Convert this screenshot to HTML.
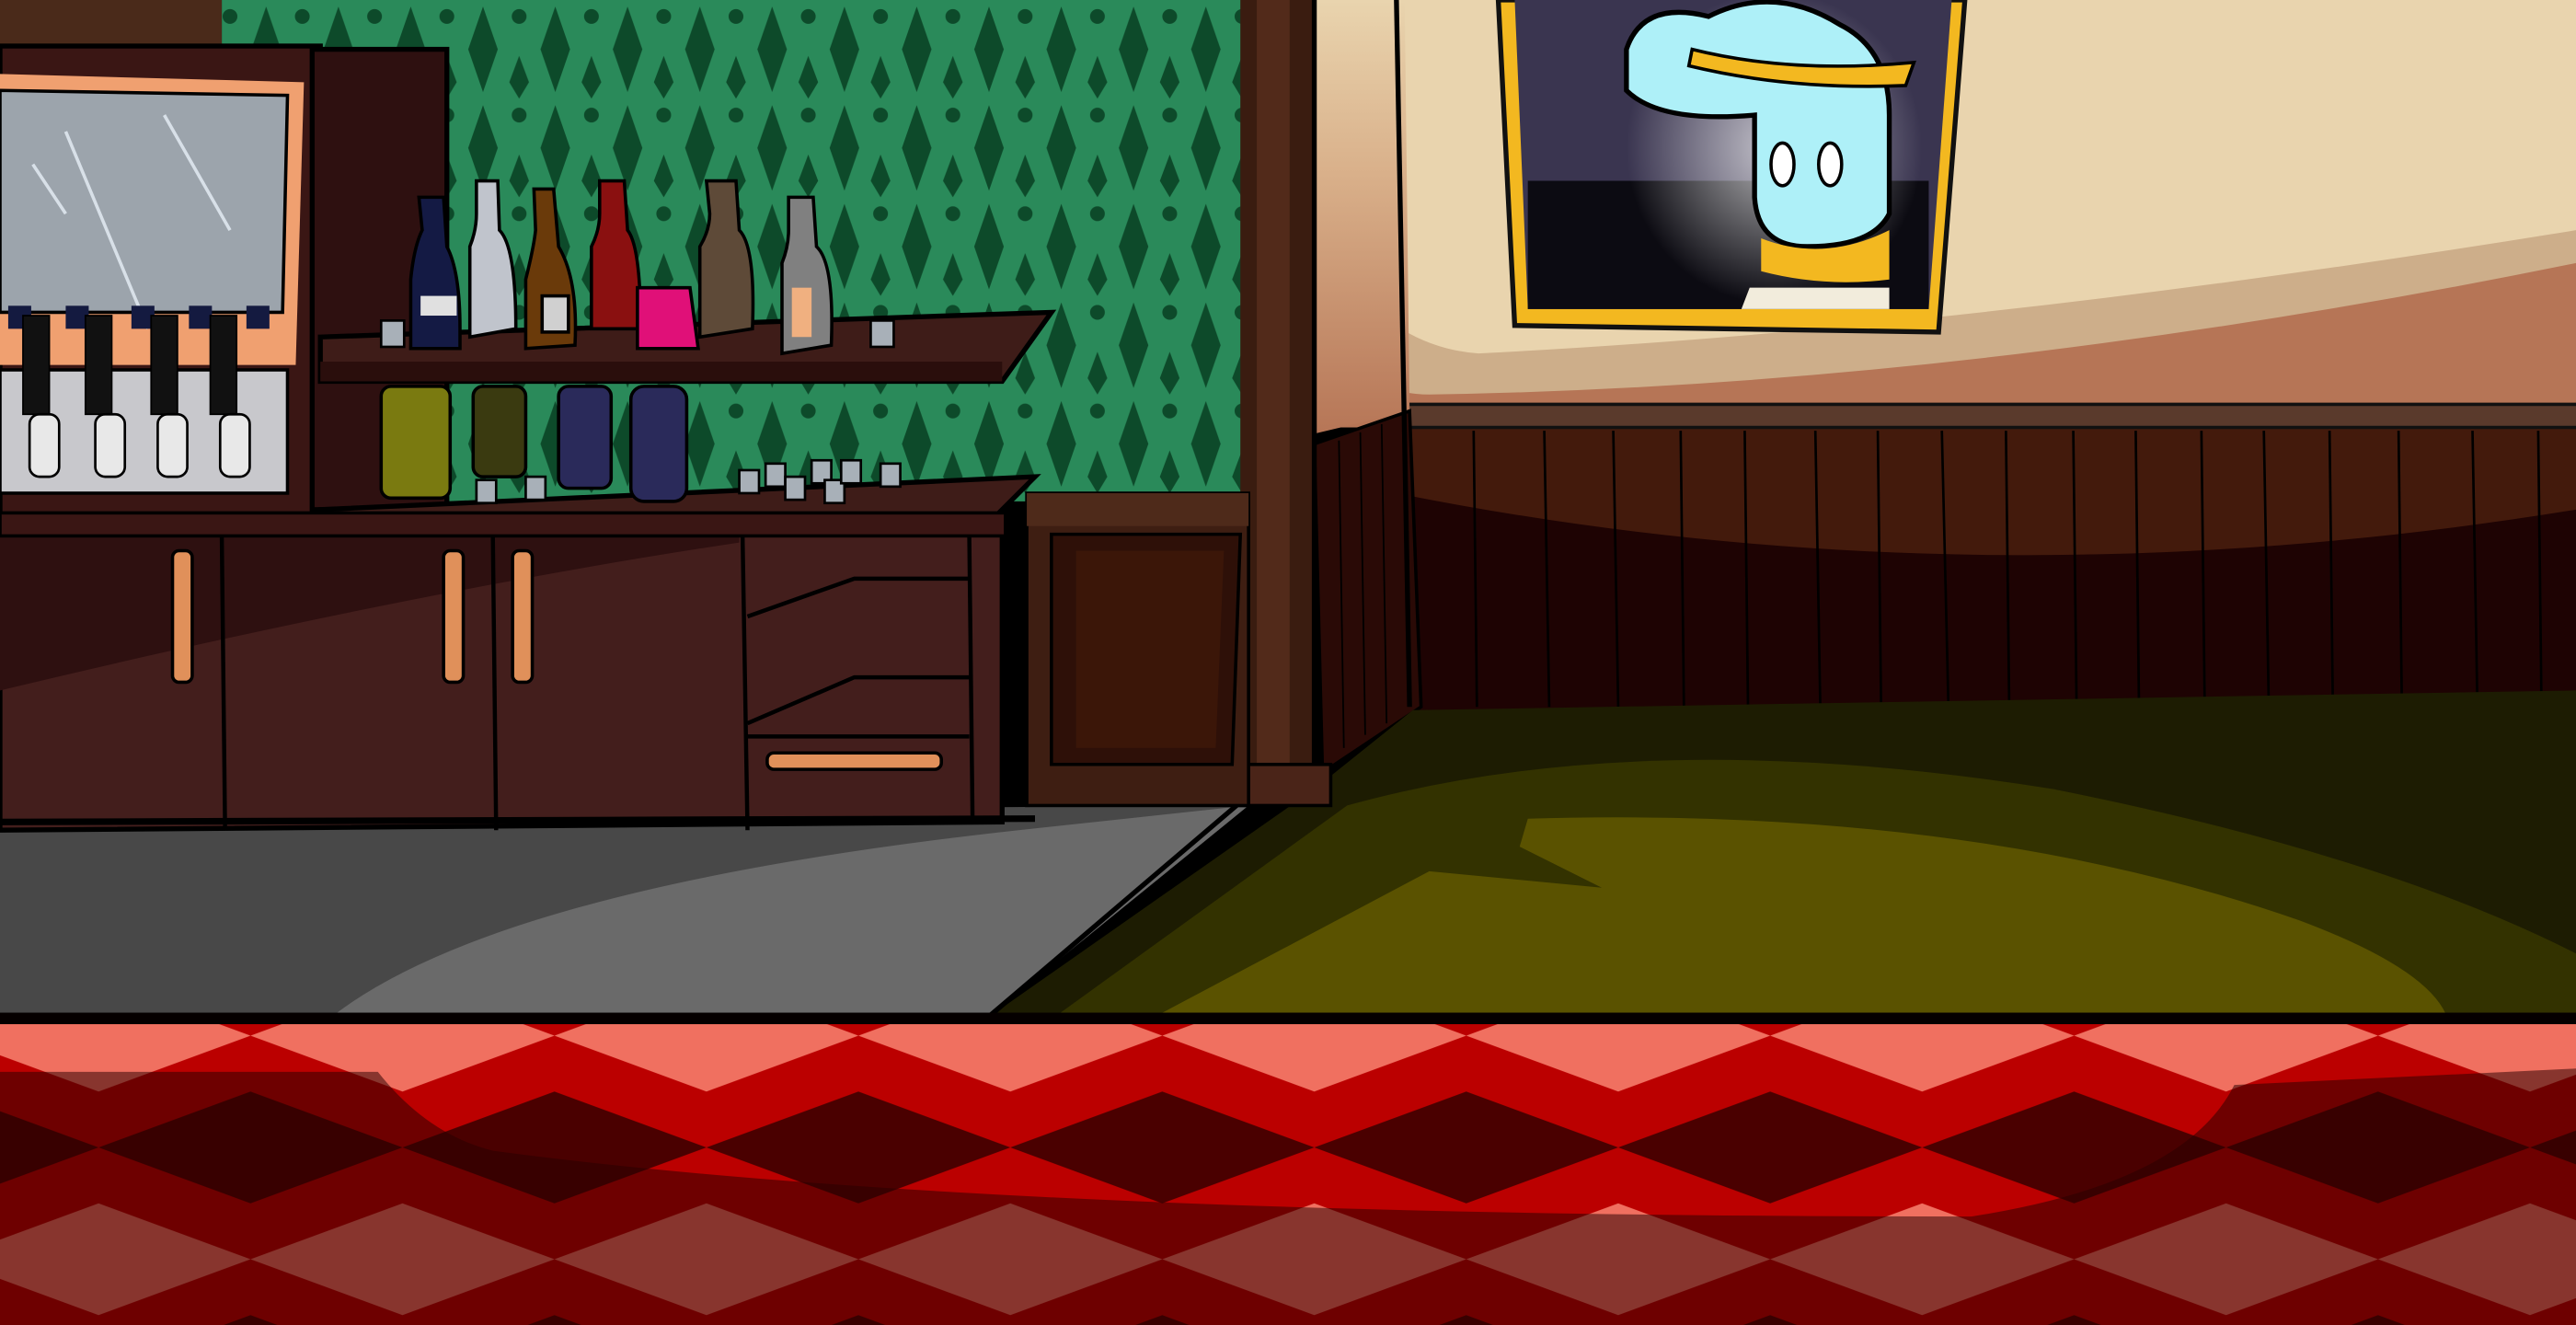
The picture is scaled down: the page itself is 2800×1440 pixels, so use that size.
<!DOCTYPE html>
<html><head><meta charset="utf-8"><style>
html,body{margin:0;padding:0;width:2800px;height:1440px;overflow:hidden;background:#000}
svg{display:block}
</style></head><body>
<svg width="2800" height="1440" viewBox="0 0 1568 806" preserveAspectRatio="none" xmlns="http://www.w3.org/2000/svg">
<defs>
<pattern id="wall" width="44" height="60" patternUnits="userSpaceOnUse" x="140" y="0">
<rect width="44" height="60" fill="#2a8a5a"/>
<path d="M22 4 L31 30 L22 56 L13 30Z" fill="#0d4a2a"/>
<path d="M0 34 L6 50 L0 60Z M44 34 L38 50 L44 60Z" fill="#0d4a2a"/>
<circle cx="0" cy="10" r="4.5" fill="#0d4a2a"/><circle cx="44" cy="10" r="4.5" fill="#0d4a2a"/>
</pattern>
<pattern id="chk" width="185" height="136" patternUnits="userSpaceOnUse" x="60" y="630">
<rect width="185" height="136" fill="#bb0000"/>
<path d="M0 -34 L92.5 0 L0 34 L-92.5 0Z M185 -34 L277.5 0 L185 34 L92.5 0Z M0 102 L92.5 136 L0 170 L-92.5 136Z M185 102 L277.5 136 L185 170 L92.5 136Z" fill="#f07060"/>
<path d="M92.5 34 L185 68 L92.5 102 L0 68Z" fill="#4a0000"/>
</pattern>
<linearGradient id="corner" x1="0" y1="0" x2="0" y2="1">
<stop offset="0" stop-color="#e9d4ae"/><stop offset="0.4" stop-color="#d9b08a"/><stop offset="1" stop-color="#b67556"/>
</linearGradient>
<radialGradient id="glow" cx="0.5" cy="0.5" r="0.5">
<stop offset="0" stop-color="#ffffff" stop-opacity="0.7"/><stop offset="1" stop-color="#ffffff" stop-opacity="0"/>
</radialGradient>
</defs>

<!-- right wall -->
<rect x="790" y="0" width="778" height="260" fill="#e9d4ae"/>
<path d="M790 120 Q830 210 900 215 Q1200 200 1568 140 L1568 260 L790 260Z" fill="#cdae8a"/>
<path d="M790 200 Q830 240 870 240 Q1200 235 1568 160 L1568 260 L790 260Z" fill="#b67556"/>
<!-- painting -->
<path d="M912 0 L1196 0 L1180 202 L922 198Z" fill="#f3b820" stroke="#111" stroke-width="3"/>
<path d="M922 0 L1188 0 L1174 188 L930 188Z" fill="#3a3550"/>
<path d="M930 110 L1174 110 L1174 188 L930 188Z" fill="#0c0b12"/>
<ellipse cx="1080" cy="90" rx="90" ry="95" fill="url(#glow)"/>
<path d="M990 30 Q1000 0 1040 10 Q1080 -10 1120 15 Q1150 30 1150 70 L1150 130 Q1140 150 1100 150 Q1070 150 1068 120 L1068 70 Q1010 75 990 55Z" fill="#aef0f8" stroke="#000" stroke-width="3"/>
<path d="M1030 30 Q1090 45 1165 38 L1160 52 Q1090 55 1028 40Z" fill="#f3b820" stroke="#000" stroke-width="2"/>
<ellipse cx="1085" cy="100" rx="7" ry="13" fill="#fff" stroke="#000" stroke-width="2"/>
<ellipse cx="1114" cy="100" rx="7" ry="13" fill="#fff" stroke="#000" stroke-width="2"/>
<path d="M1072 145 Q1110 160 1150 140 L1150 170 Q1110 175 1072 165Z" fill="#f3b820"/>
<path d="M1065 175 L1150 175 L1150 188 L1060 188Z" fill="#f2ecdc"/>
<!-- wainscot right -->
<rect x="850" y="245" width="718" height="190" fill="#431a0c"/>
<path d="M850 300 Q1200 370 1568 310 L1568 435 L850 435Z" fill="#1e0303"/>
<rect x="850" y="245" width="718" height="15" fill="#5a3a2c"/>
<line x1="850" y1="246" x2="1568" y2="246" stroke="#111" stroke-width="2"/>
<line x1="850" y1="260" x2="1568" y2="260" stroke="#111" stroke-width="2"/>
<g stroke="#000" stroke-width="1.5">
<line x1="897" y1="262" x2="899" y2="430"/><line x1="940" y1="262" x2="943" y2="430"/><line x1="982" y1="262" x2="985" y2="430"/><line x1="1023" y1="262" x2="1025" y2="430"/><line x1="1062" y1="262" x2="1064" y2="430"/><line x1="1105" y1="262" x2="1108" y2="430"/><line x1="1143" y1="262" x2="1145" y2="430"/><line x1="1182" y1="262" x2="1186" y2="430"/><line x1="1221" y1="262" x2="1223" y2="430"/><line x1="1262" y1="262" x2="1264" y2="430"/><line x1="1300" y1="262" x2="1302" y2="430"/><line x1="1340" y1="262" x2="1342" y2="430"/><line x1="1378" y1="262" x2="1381" y2="430"/><line x1="1418" y1="262" x2="1420" y2="430"/><line x1="1460" y1="262" x2="1462" y2="430"/><line x1="1505" y1="262" x2="1508" y2="430"/><line x1="1545" y1="262" x2="1547" y2="430"/>
</g>
<!-- left side wall corner -->
<path d="M795 0 L855 0 L858 250 L795 265Z" fill="url(#corner)"/>
<path d="M800 270 L858 250 L865 430 L805 470Z" fill="#2a0a06" stroke="#000" stroke-width="2"/>
<g stroke="#000" stroke-width="1"><line x1="815" y1="268" x2="818" y2="455"/><line x1="828" y1="263" x2="831" y2="447"/><line x1="841" y1="258" x2="844" y2="440"/></g>
<line x1="850" y1="0" x2="858" y2="430" stroke="#000" stroke-width="3"/>
<!-- carpet -->
<path d="M600 620 L800 480 L860 432 L1568 420 L1568 620Z" fill="#1d1c02"/>
<path d="M640 620 L820 490 Q1000 440 1250 480 Q1450 520 1568 580 L1568 620Z" fill="#333200"/>
<path d="M700 620 L870 530 L975 540 L925 515 L930 498 Q1200 490 1400 560 Q1480 590 1490 620Z" fill="#5a5200"/>
<!-- grey floor -->
<path d="M0 495 L760 490 L600 620 L0 620Z" fill="#484848"/>
<path d="M200 620 Q300 540 620 505 L760 490 L600 620Z" fill="#6a6a6a"/>
<path d="M755 488 L600 620" stroke="#000" stroke-width="3"/>
<!-- green wallpaper -->
<rect x="135" y="0" width="625" height="305" fill="url(#wall)"/>
<!-- pillar -->
<rect x="755" y="0" width="45" height="470" fill="#3a1c10"/>
<rect x="765" y="0" width="20" height="470" fill="#522a1a"/>
<line x1="800" y1="0" x2="800" y2="470" stroke="#000" stroke-width="3"/>
<rect x="755" y="465" width="55" height="25" fill="#4a2418" stroke="#000" stroke-width="2"/>
<!-- lower wall panel -->
<rect x="625" y="300" width="135" height="190" fill="#3e1e12" stroke="#000" stroke-width="2"/>
<rect x="625" y="300" width="135" height="20" fill="#4e2a1a"/>
<path d="M640 325 L755 325 L750 465 L640 465Z" fill="#2e1008" stroke="#000" stroke-width="2"/>
<path d="M655 335 L745 335 L740 455 L655 455Z" fill="#3b1608"/>
<!-- top left frame -->
<rect x="0" y="0" width="135" height="30" fill="#4a2a1a"/>
<!-- TV cabinet -->
<rect x="0" y="28" width="195" height="285" fill="#3a1614" stroke="#000" stroke-width="3"/>
<rect x="190" y="30" width="82" height="280" fill="#2e1010" stroke="#000" stroke-width="3"/>
<path d="M0 45 L185 50 L180 222 L0 222Z" fill="#f0a070"/>
<path d="M0 55 L175 58 L172 190 L0 190Z" fill="#9ca4ac" stroke="#000" stroke-width="2"/>
<g stroke="#d8e0e8" stroke-width="2" fill="none"><path d="M40 80 L90 200"/><path d="M100 70 L140 140"/><path d="M20 100 L40 130"/></g>
<rect x="0" y="225" width="175" height="75" fill="#c8c8cc" stroke="#000" stroke-width="2"/>
<g fill="#141a40"><rect x="5" y="186" width="14" height="14"/><rect x="40" y="186" width="14" height="14"/><rect x="80" y="186" width="14" height="14"/><rect x="115" y="186" width="14" height="14"/><rect x="150" y="186" width="14" height="14"/></g>
<g fill="#111" stroke="#000"><rect x="14" y="192" width="16" height="60"/><rect x="52" y="192" width="16" height="60"/><rect x="92" y="192" width="16" height="60"/><rect x="128" y="192" width="16" height="60"/></g>
<g fill="#e8e8e8" stroke="#000" stroke-width="1.5"><rect x="18" y="252" width="18" height="38" rx="6"/><rect x="58" y="252" width="18" height="38" rx="6"/><rect x="96" y="252" width="18" height="38" rx="6"/><rect x="134" y="252" width="18" height="38" rx="6"/></g>
<!-- shelves -->
<path d="M195 205 L640 190 L610 232 L195 232Z" fill="#3e1c18" stroke="#000" stroke-width="3"/>
<rect x="195" y="220" width="415" height="12" fill="#2a0e0c"/>
<!-- bottles top -->
<g stroke="#000" stroke-width="2">
<path d="M255 120 L270 120 L272 150 Q280 165 280 200 L280 212 L250 212 L250 170 Q252 150 257 140Z" fill="#141a44"/>
<path d="M290 110 L303 110 L304 140 Q314 150 314 200 L286 205 L286 150 Q290 140 290 130Z" fill="#c0c4cc"/>
<path d="M325 115 L337 115 L340 150 Q352 170 350 210 L320 212 L320 170 Q325 150 326 140Z" fill="#6a3a0a"/>
<path d="M365 110 L380 110 L382 140 Q390 150 390 200 L360 200 L360 150 Q365 140 365 130Z" fill="#8a1010"/>
<path d="M388 175 L420 175 L425 212 L388 212Z" fill="#e01078"/>
<path d="M430 110 L448 110 L450 140 Q460 150 458 200 L426 205 L426 150 Q432 140 432 130Z" fill="#5e4a38"/>
<path d="M480 120 L495 120 L497 150 Q508 160 506 210 L476 215 L476 160 Q480 150 480 140Z" fill="#808080"/>
<rect x="482" y="175" width="12" height="30" fill="#f0b080" stroke="none"/>
<rect x="256" y="180" width="22" height="12" fill="#e0e0e0" stroke="none"/>
<rect x="330" y="180" width="16" height="22" fill="#d0d0d0"/>
</g>
<!-- lower shelf counter -->
<path d="M195 310 L630 290 L600 320 L195 325Z" fill="#3e1c18" stroke="#000" stroke-width="3"/>
<g stroke="#000" stroke-width="2">
<rect x="232" y="235" width="42" height="68" rx="6" fill="#7a7a10"/>
<rect x="288" y="235" width="32" height="55" rx="6" fill="#3a3a10"/>
<rect x="340" y="235" width="32" height="62" rx="6" fill="#2a2a5a"/>
<rect x="384" y="235" width="34" height="70" rx="8" fill="#2a2a5a"/>
</g>
<g fill="#a8b0b8" stroke="#000" stroke-width="1.5">
<rect x="232" y="195" width="14" height="16"/><rect x="530" y="195" width="14" height="16"/>
<rect x="290" y="292" width="12" height="14"/><rect x="320" y="290" width="12" height="14"/>
<rect x="450" y="286" width="12" height="14"/><rect x="466" y="282" width="12" height="14"/><rect x="478" y="290" width="12" height="14"/><rect x="494" y="280" width="12" height="14"/><rect x="502" y="292" width="12" height="14"/><rect x="512" y="280" width="12" height="14"/><rect x="536" y="282" width="12" height="14"/>
</g>
<!-- cabinets -->
<path d="M0 318 L610 318 L610 500 L0 505Z" fill="#431e1c" stroke="#000" stroke-width="3"/>
<path d="M0 318 L450 318 L450 330 Q250 360 0 420Z" fill="#2e1010"/>
<rect x="0" y="312" width="612" height="14" fill="#3a1614" stroke="#000" stroke-width="2"/>
<g stroke="#000" stroke-width="2.5"><line x1="135" y1="326" x2="137" y2="505"/><line x1="300" y1="326" x2="302" y2="505"/><line x1="452" y1="326" x2="455" y2="505"/></g>
<g fill="#e0905a" stroke="#000" stroke-width="2">
<rect x="105" y="335" width="12" height="80" rx="4"/><rect x="270" y="335" width="12" height="80" rx="4"/><rect x="312" y="335" width="12" height="80" rx="4"/>
<rect x="467" y="458" width="106" height="10" rx="4"/>
</g>
<g stroke="#000" stroke-width="2.5" fill="none"><path d="M455 375 L520 352 L590 352"/><path d="M455 440 L520 412 L590 412"/><line x1="455" y1="448" x2="590" y2="448"/><line x1="590" y1="326" x2="592" y2="500"/></g>
<path d="M0 500 L630 498" stroke="#000" stroke-width="4"/>

<!-- checker floor -->
<rect x="0" y="620" width="1568" height="186" fill="url(#chk)"/>
<path d="M0 652 L230 652 Q260 690 300 700 Q600 740 1200 740 Q1330 720 1360 660 L1568 650 L1568 806 L0 806Z" fill="#280000" opacity="0.52"/>
<rect x="0" y="616" width="1568" height="7" fill="#050000"/>
</svg>
</body></html>
